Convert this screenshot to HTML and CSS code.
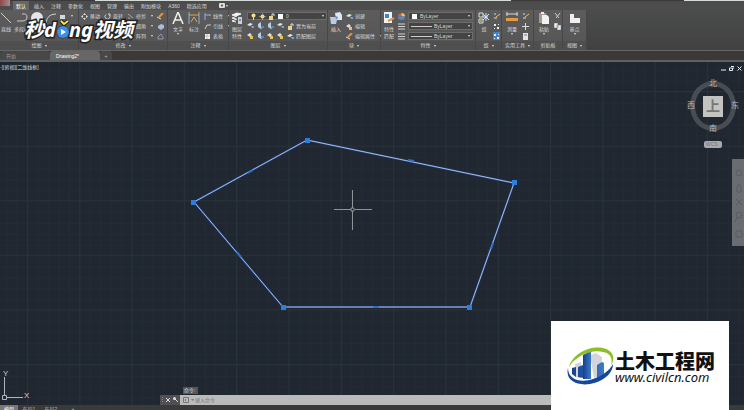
FILE: index.html
```
<!DOCTYPE html>
<html lang="zh-CN">
<head>
  <meta charset="UTF-8">
  <title>Drawing2</title>
  <link rel="stylesheet" href="styles.css">
</head>
<body>
  <svg class="defs" aria-hidden="true">
    <symbol id="line" viewBox="0 0 12 12"><path d="M1 1l10 10" stroke="#ccc" fill="none"/></symbol>
    <symbol id="poly" viewBox="0 0 12 12"><path d="M1 9h5q5 0 5-4t-5-3" stroke="#ccc" fill="none"/></symbol>
    <symbol id="circle" viewBox="0 0 12 12"><circle cx="6" cy="6" r="6" fill="#e4e4ea"/></symbol>
    <symbol id="arc" viewBox="0 0 12 12"><path d="M1 11Q2 2 11 2" stroke="#ccc" fill="none"/></symbol>
    <symbol id="rect" viewBox="0 0 7 7"><path d="M1 2h5v4H1z" fill="#d8d8d8"/></symbol>
    <symbol id="move" viewBox="0 0 7 7"><path d="M3.500 0l1.500 2H2zM3.500 7L2 5h3zM0 3.500L2 2v3zM7 3.500L5 5V2z" fill="#ddd"/></symbol>
    <symbol id="rotate" viewBox="0 0 7 7"><path d="M2 1.500a2.500 2.500 0 1 0 3 0M5 0v2h2" stroke="#ccc" fill="none"/></symbol>
    <symbol id="trim" viewBox="0 0 7 7"><path d="M1 1l5 4M1 5h2" stroke="#aaa" fill="none"/></symbol>
    <symbol id="erase" viewBox="0 0 7 7"><path d="M6 0L2 4" stroke="#e8963c" stroke-width="2"/><path d="M0 4l4 2" stroke="#ddd"/></symbol>
    <symbol id="solid" viewBox="0 0 7 7"><path d="M1 3l3-2 3 1v3L4 7 1 5z" fill="#a9bdd6"/></symbol>
    <symbol id="offset" viewBox="0 0 7 7"><path d="M1 6V4l3-3 2 3v2z" fill="none" stroke="#9a95b5"/></symbol>
    <symbol id="letter" viewBox="0 0 12 12"><path d="M1 12L6 0l5 12M3 8h6" fill="none" stroke="#f0f0f0" stroke-width="1.500"/></symbol>
    <symbol id="dim" viewBox="0 0 12 12"><path d="M1 0v12M11 0v12" stroke="#8fb0d6"/><path d="M1 3h10M3 10l3-5 3 5" stroke="#e0a648" fill="none"/></symbol>
    <symbol id="linear" viewBox="0 0 7 7"><path d="M1 0v7M1 2h5M6 1v2" stroke="#8fb0e0" fill="none"/></symbol>
    <symbol id="leader" viewBox="0 0 7 7"><path d="M1 6l2-4h4" stroke="#ccc" fill="none"/></symbol>
    <symbol id="grid" viewBox="0 0 7 7"><path d="M1 1h5v5H1z" fill="#f2f2f2"/><path d="M1 3h5M3 1v5" stroke="#999" stroke-width=".5"/></symbol>
    <symbol id="layers" viewBox="0 0 12 12"><path d="M1 3l5-2 4 1-5 2zM1 6l5-2M1 6l4 1M1 9l5-2M1 9l4 1" fill="#f4f4f4" stroke="#f4f4f4"/><path d="M7 5h4v7H7z" fill="#c5d0e0"/><path d="M8 8h2" stroke="#456"/></symbol>
    <symbol id="bulb" viewBox="0 0 7 7"><circle cx="3.500" cy="2.500" r="2" fill="#f3e08a"/><path d="M3 4h1v3H3z" fill="#ddd"/></symbol>
    <symbol id="sun" viewBox="0 0 7 7"><circle cx="3.500" cy="3.500" r="2" fill="#f1dfa0"/><path d="M3.500 0v7M0 3.500h7" stroke="#d8c890" stroke-width=".5"/></symbol>
    <symbol id="lock" viewBox="0 0 7 7"><path d="M1 3h4v4H1z" fill="#e8d48c"/><path d="M4 3V1h2v2" stroke="#ddd" fill="none"/></symbol>
    <symbol id="lay-a" viewBox="0 0 7 7"><path d="M0 3l3-2 3 1-3 2z" fill="#e4e4e4"/><path d="M4 4h3v2H5z" fill="#6fa4e4"/></symbol>
    <symbol id="lay-b" viewBox="0 0 7 7"><path d="M1 2l3-2v4l3 1-3 2-3-2z" fill="#b9cde4"/><path d="M4 4h3v2H4z" fill="#4c86cf"/></symbol>
    <symbol id="lay-c" viewBox="0 0 7 7"><path d="M0 3l3-2 2 2-2 2z" fill="#ddd"/><path d="M3 4h3v3H3z" fill="#e7c25a"/></symbol>
    <symbol id="insert" viewBox="0 0 12 12"><path d="M5 1l5-1 2 3v5H6z" fill="#dfe8f2"/><path d="M0 5h5l2 3-1 4H1z" fill="#b8cce2"/><path d="M5 4l3 1-1 3z" fill="#5b8ac4"/></symbol>
    <symbol id="match" viewBox="0 0 12 12"><path d="M1 0h8v11H1z" fill="#f1f3f7"/><path d="M2 2h4v4H2z" fill="#3e84cd"/><path d="M5 9l6-3" stroke="#dc9250" stroke-width="2"/></symbol>
    <symbol id="colors" viewBox="0 0 7 7"><path d="M0 3.500A3.500 3.500 0 0 1 3.500 0v3.500z" fill="#d95550"/><path d="M3.500 0A3.500 3.500 0 0 1 7 3.500H3.500z" fill="#e9c84c"/><path d="M0 3.500h7a3.500 3.500 0 0 1-7 0z" fill="#5288ce"/></symbol>
    <symbol id="bars" viewBox="0 0 7 7"><path d="M0 1h7M0 3.500h7M0 6h7" stroke="#d4d4d4"/></symbol>
    <symbol id="group" viewBox="0 0 12 12"><path d="M1 1h4v4H1zM1 7h4v4H1z" fill="none" stroke="#ddd"/><path d="M5 5h5M8 1v8M5 2l6 6M11 2L5 8" stroke="#cde5fa"/><circle cx="3" cy="9" r="1" fill="#a8c850"/></symbol>
    <symbol id="ungroup" viewBox="0 0 7 7"><path d="M1 1h2M1 5h3" stroke="#ddd"/><path d="M3 4l4-3" stroke="#e4c158"/></symbol>
    <symbol id="nodes" viewBox="0 0 7 7"><path d="M1 1h2v2H1zM4 4h2v2H4zM1 5h1v1H1zM5 1h1v1H5z" fill="#e6eef8"/></symbol>
    <symbol id="measure" viewBox="0 0 12 12"><path d="M0 2h12M1 0v4M11 0v4" stroke="#d8d8d8"/><path d="M0 6h12v3H0z" fill="#e59a3e"/></symbol>
    <symbol id="plus" viewBox="0 0 7 7"><path d="M3.500 0v7M0 3.500h7" stroke="#ddd"/></symbol>
    <symbol id="calc" viewBox="0 0 7 7"><path d="M1 0h5v7H1z" fill="#e4e4e4"/><path d="M2 2h3" stroke="#777"/></symbol>
    <symbol id="paste" viewBox="0 0 12 12"><path d="M1 1h7v10H1z" fill="#a59b8f"/><path d="M3 0h3v2H3z" fill="#eee"/><path d="M4 3h5l2 2v7H4z" fill="#f2f2f2"/></symbol>
    <symbol id="cut" viewBox="0 0 7 7"><path d="M1 0l4 5M6 0L2 5" stroke="#ccc" fill="none"/></symbol>
    <symbol id="copy" viewBox="0 0 7 7"><path d="M0 0h4v5H0zM3 2h4v5H3z" fill="#eee" stroke="#666" stroke-width=".5"/></symbol>
    <symbol id="base" viewBox="0 0 12 12"><path d="M1 2h4v4h6v5H1z" fill="#f0f0f0"/></symbol>
  </svg>

  <header class="ribbon">
    <div class="titlebar"><span class="app"></span><span class="gap"></span><span class="doc"></span><span class="gap wide"></span><span class="doc end"></span></div>

    <nav class="menu">
      <button class="on">默认</button>
      <button>插入</button>
      <button>注释</button>
      <button>参数化</button>
      <button>视图</button>
      <button>管理</button>
      <button>输出</button>
      <button>附加模块</button>
      <button>A360</button>
      <button>精选应用</button>
      <button class="cam" aria-label="录制"><svg viewBox="0 0 9 5"><rect width="6" height="5" rx="1" fill="#ddd"/><circle cx="3" cy="2.500" r="1" fill="#444"/><path d="M7 2h2l-1 2z" fill="#ddd"/></svg></button>
    </nav>

    <div class="panels">
      <section class="panel draw">
        <div class="tools">
          <button class="big"><svg><use href="#line"/></svg>直线</button>
          <button class="big"><svg><use href="#poly"/></svg>多段线</button>
          <button class="big" aria-label="圆"><svg><use href="#circle"/></svg></button>
          <button class="big" aria-label="圆弧"><svg><use href="#arc"/></svg></button>
          <div class="stack">
            <button class="more" aria-label="矩形"><svg><use href="#rect"/></svg></button>
          </div>
        </div>
        <h2 class="more">绘图</h2>
      </section>

      <section class="panel modify">
        <div class="tools">
          <div class="stack">
            <button><svg><use href="#move"/></svg>移动</button>
          </div>
          <div class="stack">
            <button><svg><use href="#rotate"/></svg>旋转</button>
          </div>
          <div class="stack">
            <button class="more"><svg><use href="#trim"/></svg>修剪</button>
            <button class="more"><svg></svg>圆角</button>
            <button class="more"><svg></svg>阵列</button>
          </div>
          <div class="stack">
            <button aria-label="删除"><svg><use href="#erase"/></svg></button>
            <button aria-label="分解"><svg><use href="#solid"/></svg></button>
            <button aria-label="偏移"><svg><use href="#offset"/></svg></button>
          </div>
        </div>
        <h2 class="more">修改</h2>
      </section>

      <section class="panel note">
        <div class="tools">
          <button class="big drop"><svg><use href="#letter"/></svg>文字</button>
          <button class="big"><svg><use href="#dim"/></svg>标注</button>
          <div class="stack">
            <button class="more"><svg><use href="#linear"/></svg>线性</button>
            <button class="more"><svg><use href="#leader"/></svg>引线</button>
            <button><svg><use href="#grid"/></svg>表格</button>
          </div>
        </div>
        <h2 class="more">注释</h2>
      </section>

      <section class="panel layer">
        <div class="tools">
          <button class="big"><svg><use href="#layers"/></svg>图层<br>特性</button>
          <div class="stack">
            <button class="combo"><svg><use href="#bulb"/></svg><svg><use href="#sun"/></svg><svg><use href="#lock"/></svg><i class="swatch"></i><span>0</span></button>
            <div class="row">
              <svg><use href="#lay-a"/></svg><svg><use href="#lay-b"/></svg><svg><use href="#lay-b"/></svg><svg><use href="#lay-a"/></svg><button><svg><use href="#lock"/></svg>置为当前</button>
            </div>
            <div class="row">
              <svg><use href="#lay-c"/></svg><svg><use href="#lay-b"/></svg><svg><use href="#lay-c"/></svg><svg><use href="#lay-c"/></svg><button><svg><use href="#lay-a"/></svg>匹配图层</button>
            </div>
          </div>
        </div>
        <h2 class="more">图层</h2>
      </section>

      <section class="panel block">
        <div class="tools">
          <button class="big"><svg><use href="#insert"/></svg>插入</button>
          <div class="stack">
            <button><svg><use href="#lay-a"/></svg>创建</button>
            <button><svg><use href="#lay-c"/></svg>编辑</button>
            <button class="more"><svg><use href="#erase"/></svg>编辑属性</button>
          </div>
        </div>
        <h2 class="more">块</h2>
      </section>

      <section class="panel props">
        <div class="tools">
          <button class="big"><svg><use href="#match"/></svg>特性<br>匹配</button>
          <div class="stack">
            <button aria-label="颜色"><svg><use href="#colors"/></svg></button>
            <button aria-label="线宽"><svg><use href="#bars"/></svg></button>
            <button aria-label="线型"><svg><use href="#bars"/></svg></button>
          </div>
          <div class="stack fill">
            <button class="combo"><i class="swatch"></i><span>ByLayer</span></button>
            <button class="combo"><i class="rule"></i><span>ByLayer</span></button>
            <button class="combo"><i class="rule"></i><span>ByLayer</span></button>
          </div>
        </div>
        <h2 class="more">特性</h2>
      </section>

      <section class="panel groups">
        <div class="tools">
          <button class="big"><svg><use href="#group"/></svg>组</button>
          <div class="stack">
            <button aria-label="解除编组"><svg><use href="#ungroup"/></svg></button>
            <button aria-label="组编辑"><svg><use href="#nodes"/></svg></button>
            <button class="lit" aria-label="组选择"><svg><use href="#nodes"/></svg></button>
          </div>
        </div>
        <h2 class="more">组</h2>
      </section>

      <section class="panel utils">
        <div class="tools">
          <button class="big drop"><svg><use href="#measure"/></svg>测量</button>
          <div class="stack">
            <button aria-label="快速选择"><svg><use href="#ungroup"/></svg></button>
            <button aria-label="点"><svg><use href="#plus"/></svg></button>
            <button aria-label="计算器"><svg><use href="#calc"/></svg></button>
          </div>
        </div>
        <h2 class="more">实用工具</h2>
      </section>

      <section class="panel clip">
        <div class="tools">
          <button class="big drop"><svg><use href="#paste"/></svg>粘贴</button>
          <div class="stack">
            <button aria-label="剪切"><svg><use href="#cut"/></svg></button>
            <button aria-label="复制"><svg><use href="#copy"/></svg></button>
          </div>
        </div>
        <h2>剪贴板</h2>
      </section>

      <section class="panel view">
        <div class="tools">
          <button class="big drop"><svg><use href="#base"/></svg>基点</button>
        </div>
        <h2 class="more">视图</h2>
      </section>
    </div>
  </header>

  <nav class="files">
    <button>开始</button>
    <button class="on">Drawing2*</button>
    <button class="add">+</button>
  </nav>

  <main class="canvas">
    <svg class="drawing" aria-label="图形">
      <defs>
        <pattern id="minor" x="6" y="8" width="10.460" height="10.920" patternUnits="userSpaceOnUse"><path d="M0 .5h11M.5 0v11" stroke="#222b34" fill="none"/></pattern>
        <pattern id="major" x="27" y="29" width="52.300" height="54.600" patternUnits="userSpaceOnUse"><path d="M0 .5h53M.5 0v55" stroke="#28323a" fill="none"/></pattern>
      </defs>
      <rect width="100%" height="100%" fill="url(#minor)"/>
      <rect width="100%" height="100%" fill="url(#major)"/>

      <!-- selected polyline -->
      <path class="glow" d="M194 140L307 78l207 43-44 124H283z"/>
      <path class="edge" d="M194 140L307 78l207 43-44 124H283z"/>
      <path class="mid" d="M248 111l5-3M408 98l6 1M491 187l2-6M373 245h6M237 190l4 5"/>
      <path class="grip" d="M191 138h5v5h-5zM305 76h5v5h-5zM512 118h5v5h-5zM467 243h5v5h-5zM281 243h5v5h-5z"/>

      <path class="cursor" d="M334 147.500h17M355 147.500h17M352.500 128v18M352.500 149v19M351 146h3v3h-3z"/>
    </svg>

    <span class="viewname">-][俯视][二维线框]</span>
    <div class="wincontrols">
      <button aria-label="最小化"><svg viewBox="0 0 5 5"><path d="M0 4h5" stroke="#eee"/></svg></button>
      <button aria-label="还原"><svg viewBox="0 0 5 5"><path d="M.5 2h3v2.500h-3zM2 .5h3V3" stroke="#eee" fill="none"/></svg></button>
      <button aria-label="关闭"><svg viewBox="0 0 5 5"><path d="M.5.5l4 4M4.500.5l-4 4" stroke="#eee"/></svg></button>
    </div>

    <div class="compass">
      <span class="n">北</span>
      <span class="w">西</span>
      <button class="cube">上</button>
      <span class="e">东</span>
      <span class="s">南</span>
    </div>
    <button class="wcs">WCS</button>
    <div class="navbar">
      <svg viewBox="0 0 12 88"><g fill="none" stroke="#585c61"><circle cx="7" cy="14" r="3"/><path d="M5 28l2-3 2 3v5H5zM4 40l6 6M10 40l-6 6"/><circle cx="7" cy="56" r="3"/><path d="M5 59l-2 4M4 72h6v6H4z"/></g></svg>
    </div>

    <svg class="ucs" viewBox="0 0 34 40">
      <path d="M4.500 12v19M6 32.500h17M2.500 30.500h4v4h-4z"/>
      <text x="3" y="11">Y</text>
      <text x="24" y="33">X</text>
    </svg>

    <div class="command">
      <span class="history">命令:</span>
      <div class="prompt">
        <span class="handle"><svg viewBox="0 0 20 10"><path d="M2.500 2v6" stroke="#888" stroke-dasharray="1"/><path d="M6 3l4 4M10 3L6 7M14 3l4 4" stroke="#ddd" fill="none"/><circle cx="14.500" cy="3.500" r="1.500" fill="#ddd"/></svg></span>
        <label for="cmd"><svg viewBox="0 0 12 10"><path d="M.5 2.500h5v5h-5zM2 4l1 1-1 1" stroke="#777" fill="none"/><path d="M8 4h3L9.500 6z" fill="#777"/></svg></label>
        <input id="cmd" type="text" placeholder="键入命令">
      </div>
    </div>
  </main>

  <footer class="status">
    <button class="on">模型</button>
    <button>布局1</button>
    <button>布局2</button>
    <button>+</button>
  </footer>

  <div class="dong">秒d<svg viewBox="0 0 13 20"><path d="M5 1l3 3 4-3" fill="none" stroke="#222" stroke-width="4"/><path d="M5 1l3 3 4-3" fill="none" stroke="#f4e63a" stroke-width="2"/><circle cx="7" cy="12" r="6" fill="#3f8ee6" stroke="#222"/><path d="M5 9l5 3-5 3z" fill="#fff"/></svg>ng视频</div>

  <a class="civil" href="#">
    <svg viewBox="0 0 48 40">
      <defs><linearGradient id="tower" x2="1"><stop stop-color="#143f8f"/><stop offset="1" stop-color="#3f79c6"/></linearGradient></defs>
      <path d="M23 9l6-2 6 4v18l-8 3z" fill="#d3d6d9"/>
      <path d="M8 18l6-2v16l-6-1z" fill="#cfd4da"/>
      <path d="M16 9l8-4v28h-8z" fill="url(#tower)"/>
      <path d="M11 21l5-2v13l-5-1zM5 22l4-1v10l-4-3zM30 19l5-3 2 1v13l-7 2z" fill="url(#tower)"/>
      <path d="M2 21C6 7 25-2 39 3c8 3 9 10 5 16 2-7-1-12-8-13C24 3 9 10 2 21z" fill="#8cbf26"/>
      <path d="M1 22c0 12 13 15 25 11 9-3 16-8 20-15 0 10-11 18-23 20C9 40-2 34 1 22z" fill="#174799"/>
    </svg>
    <span class="name">土木工程网</span>
    <span class="site">www.civilcn.com</span>
  </a>
</body>
</html>
```
FILE: styles.css
```
* {
  box-sizing: border-box;
}

body {
  margin: 0;
  height: 100vh;
  display: flex;
  flex-direction: column;
  position: relative;
  overflow: hidden;
  background: #202731;
  color: #d8d8d8;
  font: 5px/8px "Liberation Sans", "Noto Sans CJK SC", sans-serif;
}

button, input {
  font: inherit;
  color: inherit;
  background: none;
  border: 0;
  padding: 0;
  margin: 0;
  white-space: nowrap;
}

svg {
  display: block;
  flex: none;
}

.defs {
  position: absolute;
  width: 0;
  height: 0;
}

/* ribbon */
.ribbon {
  background: linear-gradient(#4b4b4b, #575757);
}

.titlebar {
  display: flex;
  height: 1px;
  background: #3b3b3b;
}

.app {
  width: 10px;
  height: 6px;
  background: linear-gradient(90deg, #8c4a4a, #a88);
}

.gap { width: 85px; }
.gap.wide { width: 173px; }
.doc { width: 416px; background: #d5dbd6; }
.doc.end { flex: 1; }

.menu {
  display: flex;
  height: 9px;
  padding-left: 13px;
  gap: 7px;
}

.menu .on {
  padding: 0 3px;
  margin-right: -2px;
  background: #666;
  color: #fff;
}

.cam {
  margin-left: 5px;
}

.cam svg {
  width: 9px;
  height: 5px;
}

.panels {
  display: flex;
  height: 41px;
  background: linear-gradient(#4a4d4b, #414141);
  border-bottom: 1px solid #666;
}

.panel {
  display: flex;
  flex-direction: column;
  flex: none;
  background: linear-gradient(#5c5c5c, #555);
  border-right: 1px solid #474747;
}

.draw { width: 79px; }
.modify { width: 89px; }
.note { width: 61px; }
.layer { width: 99px; }
.block { width: 53px; }
.props { width: 95px; }
.groups { width: 26px; }
.utils { width: 32px; }
.clip { width: 29px; }
.view { width: 24px; }

.tools {
  display: flex;
  gap: 4px;
  height: 31px;
  padding: 2px 2px 0;
}

.panel h2 {
  margin: 0;
  font-size: 5px;
  font-weight: normal;
  line-height: 9px;
  text-align: center;
  background: #4f4f4f;
}

.more::after, .combo::after {
  content: "";
  display: inline-block;
  margin-left: 3px;
  border: 1px solid transparent;
  border-top: 2px solid #ddd;
  border-bottom: 0;
  vertical-align: middle;
}

.big {
  display: flex;
  flex-direction: column;
  align-items: center;
  min-width: 12px;
  line-height: 7px;
}

.big svg {
  width: 12px;
  height: 12px;
  margin-bottom: 2px;
}

.drop::after {
  content: "";
  border: 1px solid transparent;
  border-top: 2px solid #ddd;
}

.draw .tools { padding-left: 0; gap: 2px; }
.note .tools, .utils .tools, .clip .tools { padding-left: 4px; }
.view .tools { justify-content: center; }
.groups .tools, .props .tools { gap: 3px; }

.stack {
  display: flex;
  flex-direction: column;
  gap: 2px;
}

.stack button {
  display: flex;
  align-items: center;
  gap: 2px;
  height: 8px;
}

.stack svg {
  width: 7px;
  height: 7px;
}

.stack .lit {
  background: #4283cb;
}

.fill {
  flex: 1;
}

.row {
  display: flex;
  gap: 3px;
  height: 8px;
}

.stack .combo {
  padding: 0 2px;
  background: #444;
  border: 1px solid #6c6c6c;
  text-align: left;
}

.layer .combo {
  width: 80px;
}

.combo span {
  flex: 1;
}

.swatch {
  width: 5px;
  height: 5px;
  margin: 0 1px;
  background: #fff;
}

.rule {
  width: 21px;
  height: 1px;
  background: #ccc;
}

/* file tabs */
.files {
  display: flex;
  height: 11px;
  background: #3b3837;
  border-bottom: 2px solid #5e625f;
}

.files button {
  width: 50px;
  padding: 0 6px;
  text-align: left;
  background: #484848;
  border-radius: 3px 3px 0 0;
  color: #999;
}

.files .on {
  background: #676767;
  color: #fff;
}

.files .add {
  width: 12px;
  padding: 0;
  text-align: center;
  color: #bbb;
}

/* drawing area */
.canvas {
  flex: 1;
  position: relative;
  min-height: 0;
}

.drawing {
  position: absolute;
  width: 100%;
  height: 100%;
}

.drawing path { fill: none; }
.drawing .glow { stroke: #234583; stroke-width: 2; }
.drawing .edge { stroke: #a9bbe8; stroke-width: 1; }
.drawing .mid { stroke: #2c70c4; stroke-width: 2; }
.drawing .grip { fill: #2b7fdc; }
.drawing .cursor { stroke: #8f9396; }

.viewname {
  position: absolute;
  top: 1px;
  left: 0;
}

.wincontrols {
  position: absolute;
  top: 4px;
  right: 2px;
  display: flex;
  gap: 3px;
}

.wincontrols svg {
  width: 5px;
  height: 5px;
}

.compass {
  position: absolute;
  top: 19px;
  right: 8px;
  width: 46px;
  height: 50px;
  border: 5px solid #484d54;
  border-radius: 50%;
  display: grid;
  place-items: center;
  color: #b4b8bc;
  font-size: 8px;
}

.compass span {
  position: absolute;
}

.compass .n { top: -6px; }
.compass .s { bottom: -7px; }
.compass .w { left: -8px; }
.compass .e { right: -8px; }

.cube {
  width: 20px;
  height: 21px;
  background: #c3c4c1;
  color: #777;
  font-size: 14px;
  font-weight: bold;
  line-height: 18px;
}

.wcs {
  position: absolute;
  top: 79px;
  right: 22px;
  width: 18px;
  height: 7px;
  padding-left: 2px;
  line-height: 7px;
  text-align: left;
  background: #aaa9b2;
  border-radius: 2px;
  color: #777;
}

.navbar {
  position: absolute;
  top: 97px;
  right: 0;
  width: 12px;
  height: 87px;
  background: #696c71;
}

.ucs {
  position: absolute;
  left: 0;
  bottom: 0;
  width: 34px;
  height: 40px;
  fill: none;
  stroke: #b0b4b8;
}

.ucs text {
  fill: #c8ccd0;
  stroke: none;
  font-size: 8px;
}

.command {
  position: absolute;
  left: 160px;
  right: 170px;
  bottom: 0;
}

.history {
  display: block;
  width: 15px;
  margin: 0 0 1px 23px;
  padding-left: 1px;
  line-height: 7px;
  background: #53575b;
}

.prompt {
  display: flex;
  height: 10px;
  line-height: 10px;
  background: #b9bcbb;
  color: #666;
}

.handle {
  width: 20px;
  margin-right: 3px;
  background: #4e5054;
}

.prompt svg {
  height: 10px;
}

.prompt input {
  flex: 1;
}

.prompt input::placeholder {
  color: #777;
}

.status {
  display: flex;
  height: 5px;
  overflow: hidden;
  background: #3a3a3a;
}

.status button {
  height: 8px;
  width: 22px;
  line-height: 7px;
  color: #bbb;
}

.status .on {
  width: 18px;
  background: #777;
  color: #fff;
}

/* watermarks */
.dong {
  position: absolute;
  top: 18px;
  left: 24px;
  display: flex;
  font: italic bold 20px/24px "Noto Sans", "Noto Sans CJK SC", sans-serif;
  color: #fff;
  -webkit-text-stroke: 3px #222;
  paint-order: stroke fill;
}

.dong svg {
  position: relative;
  width: 13px;
  height: 20px;
  margin-top: 2px;
  overflow: visible;
}

.civil {
  position: absolute;
  right: 15px;
  bottom: 0;
  width: 178px;
  height: 89px;
  padding: 25px 14px 0 16px;
  display: grid;
  grid-template: 24px 14px / 48px 1fr;
  background: #fff;
  color: #111;
  text-decoration: none;
  white-space: nowrap;
}

.civil svg {
  grid-row: 1 / 3;
  width: 48px;
  height: 40px;
}

.name {
  font: 900 20px/30px "Noto Sans CJK SC", sans-serif;
}

.site {
  font: italic 13px/14px "Noto Sans", sans-serif;
}
```
